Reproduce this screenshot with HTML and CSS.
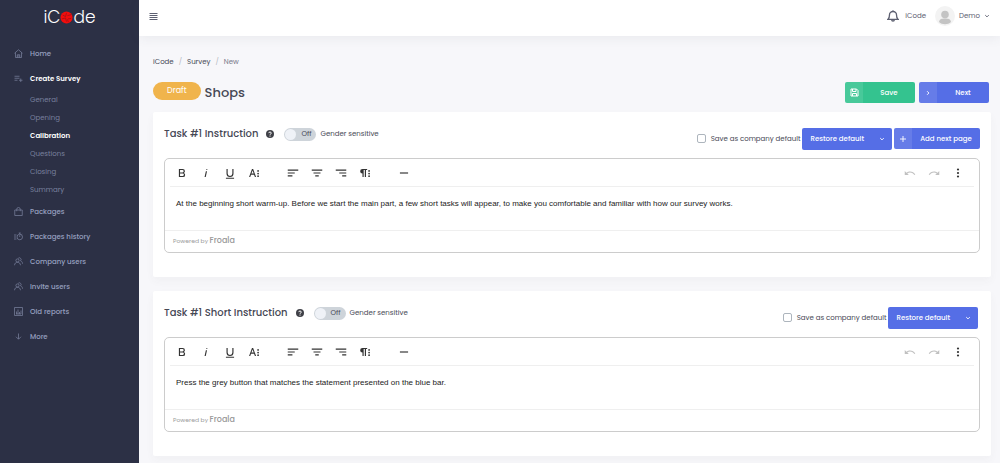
FILE: index.html
```html
<!DOCTYPE html>
<html lang="en">
<head>
<meta charset="UTF-8">
<meta name="viewport" content="width=device-width, initial-scale=1.0">
<title>iCode - Survey</title>
<link rel="stylesheet" href="styles.css">
</head>
<body>
<svg class="sprite" aria-hidden="true">
    <symbol id="i-home" viewBox="0 0 18 18"><path d="M1 8.500 9 1.500l8 7M3 7v10h12V7M6.500 17v-5.500h5V17M6.500 14h5"/></symbol>
    <symbol id="i-list" viewBox="0 0 18 18"><path d="M1 4.500h10M1 8.500h10M1 12.500h6M10 12.500h7M13.500 9v7"/></symbol>
    <symbol id="i-bag" viewBox="0 0 18 18"><path d="M1.500 6h15v11h-15zM5.500 8.500V4.500a3.500 3.500 0 0 1 7 0v4"/></symbol>
    <symbol id="i-timer" viewBox="0 0 18 18"><circle cx="11.500" cy="10" r="5.500"/><path d="M11.500 10V6.500M9.500 2h4M11.500 2v2M15.500 5l1.300-1.300M0 6h5M0 10h4M0 14h5"/></symbol>
    <symbol id="i-users" viewBox="0 0 18 18"><circle cx="7" cy="7" r="3.200"/><path d="M1 16.500c.5-4 2.500-6 6-6s5.500 2 6 6M8.500 2.500a3.200 3.200 0 1 1 4.500 5c2.500 1 3.800 3 4.200 6"/></symbol>
    <symbol id="i-chart" viewBox="0 0 18 18"><path d="M1 1h16v16H1zM5 14V9M8 14V5M11 14v-4M14 14V7M4 14h10"/></symbol>
    <symbol id="i-down" viewBox="0 0 18 18"><path d="M9 3v11M4 9.500l5 5 5-5"/></symbol>
    <symbol id="i-menu" viewBox="0 0 18 18"><path d="M1 3h16M1 7h16M1 11h16M1 15h16"/></symbol>
    <symbol id="i-bell" viewBox="0 0 18 18"><path d="M1.500 14h15c-2-1.500-2.200-3-2.200-6.500a5.300 5.300 0 0 0-10.600 0C3.700 11 3.500 12.500 1.500 14zM7 14.500a2 2 0 0 0 4 0M9 2V.5"/></symbol>
    <symbol id="i-caret" viewBox="0 0 10 10"><path d="M2 3.500l3 3 3-3"/></symbol>
    <symbol id="i-right" viewBox="0 0 10 10"><path d="M3.500 2l3 3-3 3"/></symbol>
    <symbol id="i-plus" viewBox="0 0 10 10"><path d="M5 0v10M0 5h10"/></symbol>
    <symbol id="i-save" viewBox="0 0 18 18"><path d="M2 2h11l3 3v11H2zM5 2v5h7V2M5 16v-5h8v5"/></symbol>
    <symbol id="i-help" viewBox="0 0 16 16"><circle cx="8" cy="8" r="8" fill="#3f4047"/><path d="M5.400 6.200C5.500 3.300 10.600 3.300 10.600 6.200 10.600 8 8 8 8 9.600M8 11.200v2" fill="none" stroke="#fff" stroke-width="2"/></symbol>
    <symbol id="i-bold" viewBox="0 0 24 24"><path d="M15.250 11.800A3.680 3.680 0 0 0 17 9a3.930 3.930 0 0 0-3.860-4H6.650v14h7a3.740 3.740 0 0 0 3.700-3.780V15.100a3.640 3.640 0 0 0-2.100-3.300zM8.650 7h4.200a2 2 0 0 1 0 4h-4.200zm4.600 10h-4.600v-4h4.600a2 2 0 0 1 0 4z"/></symbol>
    <symbol id="i-italic" viewBox="0 0 24 24"><path d="M11.760 9h2l-2.200 10h-2zm1.680-4a1 1 0 1 0 1 1 1 1 0 0 0-1-1z"/></symbol>
    <symbol id="i-underline" viewBox="0 0 24 24"><path d="M19 20v2H5v-2zM16 5v8a4 4 0 0 1-8 0V5H6v8a6 6 0 0 0 12 0V5z"/></symbol>
    <symbol id="i-text" viewBox="0 0 24 24"><path d="M13.550 19h2l-5-14h-2l-5 14h2l1.400-4h5.100zm-5.900-6 1.900-5.200 1.900 5.200z"/><circle cx="19" cy="17.500" r="1.500"/><circle cx="19" cy="13" r="1.500"/><circle cx="19" cy="8.500" r="1.500"/></symbol>
    <symbol id="i-left" viewBox="0 0 24 24"><path d="M3 18h8v-2H3zM3 6v2h18V6zm0 7h12v-2H3z"/></symbol>
    <symbol id="i-center" viewBox="0 0 24 24"><path d="M9 18h6v-2H9zm-3-7v2h12v-2zM3 6v2h18V6z"/></symbol>
    <symbol id="i-alignright" viewBox="0 0 24 24"><path d="M14 18h7v-2h-7zm-5-5h12v-2H9zM3 6v2h18V6z"/></symbol>
    <symbol id="i-para" viewBox="0 0 24 24"><path d="M7.700 5a4 4 0 0 0 0 8v6h2V7h2v12h2V7h2V5z"/><circle cx="19" cy="17.500" r="1.500"/><circle cx="19" cy="13" r="1.500"/><circle cx="19" cy="8.500" r="1.500"/></symbol>
    <symbol id="i-line" viewBox="0 0 24 24"><path d="M5 11h14v2H5z"/></symbol>
    <symbol id="i-undo" viewBox="0 0 24 24"><path d="M10.400 9.400c-1.700.3-3.200.9-4.600 2L3 8.500v7h7l-2.700-2.700c3.700-2.600 8.800-1.800 11.500 1.900.2.300.4.500.5.800l1.800-.9c-2.200-3.800-6.400-5.900-10.700-5.200z"/></symbol>
    <symbol id="i-redo" viewBox="0 0 24 24"><path d="M13.600 9.400c1.700.3 3.200.9 4.600 2L21 8.500v7h-7l2.700-2.700c-3.700-2.600-8.800-1.800-11.500 1.900-.2.300-.4.500-.5.800l-1.800-.9c2.200-3.800 6.400-5.900 10.700-5.200z"/></symbol>
    <symbol id="i-dots" viewBox="0 0 24 24"><circle cx="12" cy="6" r="1.900"/><circle cx="12" cy="12" r="1.900"/><circle cx="12" cy="18" r="1.900"/></symbol>
</svg>

<div class="app">
    <aside class="sidebar">
        <a class="logo" href="#">iC<svg class="brain" viewBox="0 0 14 14"><circle cx="7" cy="7" r="6.500" fill="#f20d0d"/><path d="M3 4.500 6 6l1-4M2 8.500l4-1 1 4M8 5l4-1M8.500 8.500 12 8M9 12l-1-3" fill="none" stroke="#8c1118" stroke-width=".7"/></svg>de</a>
        <nav class="menu">
            <a class="item" href="#"><svg class="icon"><use href="#i-home"/></svg>Home</a>
            <a class="item active" href="#"><svg class="icon"><use href="#i-list"/></svg>Create Survey</a>
            <div class="submenu">
                <a href="#">General</a>
                <a href="#">Opening</a>
                <a class="active" href="#">Calibration</a>
                <a href="#">Questions</a>
                <a href="#">Closing</a>
                <a href="#">Summary</a>
            </div>
            <a class="item" href="#"><svg class="icon"><use href="#i-bag"/></svg>Packages</a>
            <a class="item" href="#"><svg class="icon"><use href="#i-timer"/></svg>Packages history</a>
            <a class="item" href="#"><svg class="icon"><use href="#i-users"/></svg>Company users</a>
            <a class="item" href="#"><svg class="icon"><use href="#i-users"/></svg>Invite users</a>
            <a class="item" href="#"><svg class="icon"><use href="#i-chart"/></svg>Old reports</a>
            <a class="item" href="#"><svg class="icon"><use href="#i-down"/></svg>More</a>
        </nav>
    </aside>

    <div class="main">
        <header class="topbar">
            <button class="plain" aria-label="Menu"><svg class="icon"><use href="#i-menu"/></svg></button>
            <div class="account">
                <button class="plain" aria-label="Notifications"><svg class="icon bell"><use href="#i-bell"/></svg></button>
                <span class="company">iCode</span>
                <button class="plain user">
                    <svg class="avatar" viewBox="0 0 20 20"><circle cx="10" cy="10" r="10" fill="#f3f3f3"/><circle cx="10" cy="8.500" r="3.800" fill="#c4c4c4"/><path d="M4 16c.5-3 2.500-3.500 6-3.500s5.500.5 6 3.500c-3 3-9 3-12 0z" fill="#c4c4c4"/></svg>
                    Demo
                    <svg class="icon caret"><use href="#i-caret"/></svg>
                </button>
            </div>
        </header>

        <main class="content">
            <nav class="breadcrumb">
                <a href="#">iCode</a><i>/</i><a href="#">Survey</a><i>/</i><span>New</span>
            </nav>

            <div class="page-head">
                <span class="badge">Draft</span>
                <h1>Shops</h1>
                <div class="actions">
                    <button class="btn green"><span class="btn-icon"><svg class="icon"><use href="#i-save"/></svg></span><span class="btn-text">Save</span></button>
                    <button class="btn"><span class="btn-icon"><svg class="icon caret"><use href="#i-right"/></svg></span><span class="btn-text">Next</span></button>
                </div>
            </div>

            <section class="card">
                <div class="card-head">
                    <div class="card-title">
                        <h2>Task #1 Instruction</h2>
                        <svg class="help"><use href="#i-help"/></svg>
                        <label class="switch"><input type="checkbox"><span class="track">Off</span>Gender sensitive</label>
                    </div>
                    <div class="card-tools">
                        <label class="check"><input type="checkbox">Save as company default</label>
                        <div class="split">
                            <button class="btn">Restore default</button>
                            <button class="btn toggle" aria-label="More options"><svg class="icon caret"><use href="#i-caret"/></svg></button>
                        </div>
                        <button class="btn add"><span class="btn-icon"><svg class="icon caret"><use href="#i-plus"/></svg></span><span class="btn-text">Add next page</span></button>
                    </div>
                </div>
                <div class="editor">
                    <div class="toolbar">
                        <div class="group">
                            <button aria-label="Bold"><svg><use href="#i-bold"/></svg></button>
                            <button aria-label="Italic"><svg><use href="#i-italic"/></svg></button>
                            <button aria-label="Underline"><svg><use href="#i-underline"/></svg></button>
                            <button aria-label="More text"><svg><use href="#i-text"/></svg></button>
                        </div>
                        <div class="group">
                            <button aria-label="Align left"><svg><use href="#i-left"/></svg></button>
                            <button aria-label="Align center"><svg><use href="#i-center"/></svg></button>
                            <button aria-label="Align right"><svg><use href="#i-alignright"/></svg></button>
                            <button aria-label="More paragraph"><svg><use href="#i-para"/></svg></button>
                        </div>
                        <div class="group">
                            <button aria-label="Insert line"><svg><use href="#i-line"/></svg></button>
                        </div>
                        <div class="group end">
                            <button aria-label="Undo" disabled><svg><use href="#i-undo"/></svg></button>
                            <button aria-label="Redo" disabled><svg><use href="#i-redo"/></svg></button>
                            <button aria-label="More"><svg><use href="#i-dots"/></svg></button>
                        </div>
                    </div>
                    <div class="text" contenteditable="true">At the beginning short warm-up. Before we start the main part, a few short tasks will appear, to make you comfortable and familiar with how our survey works.</div>
                    <div class="powered">Powered by <a href="#">Froala</a></div>
                </div>
            </section>

            <section class="card">
                <div class="card-head">
                    <div class="card-title">
                        <h2>Task #1 Short Instruction</h2>
                        <svg class="help"><use href="#i-help"/></svg>
                        <label class="switch"><input type="checkbox"><span class="track">Off</span>Gender sensitive</label>
                    </div>
                    <div class="card-tools">
                        <label class="check"><input type="checkbox">Save as company default</label>
                        <div class="split last">
                            <button class="btn">Restore default</button>
                            <button class="btn toggle" aria-label="More options"><svg class="icon caret"><use href="#i-caret"/></svg></button>
                        </div>
                    </div>
                </div>
                <div class="editor">
                    <div class="toolbar">
                        <div class="group">
                            <button aria-label="Bold"><svg><use href="#i-bold"/></svg></button>
                            <button aria-label="Italic"><svg><use href="#i-italic"/></svg></button>
                            <button aria-label="Underline"><svg><use href="#i-underline"/></svg></button>
                            <button aria-label="More text"><svg><use href="#i-text"/></svg></button>
                        </div>
                        <div class="group">
                            <button aria-label="Align left"><svg><use href="#i-left"/></svg></button>
                            <button aria-label="Align center"><svg><use href="#i-center"/></svg></button>
                            <button aria-label="Align right"><svg><use href="#i-alignright"/></svg></button>
                            <button aria-label="More paragraph"><svg><use href="#i-para"/></svg></button>
                        </div>
                        <div class="group">
                            <button aria-label="Insert line"><svg><use href="#i-line"/></svg></button>
                        </div>
                        <div class="group end">
                            <button aria-label="Undo" disabled><svg><use href="#i-undo"/></svg></button>
                            <button aria-label="Redo" disabled><svg><use href="#i-redo"/></svg></button>
                            <button aria-label="More"><svg><use href="#i-dots"/></svg></button>
                        </div>
                    </div>
                    <div class="text" contenteditable="true">Press the grey button that matches the statement presented on the blue bar.</div>
                    <div class="powered">Powered by <a href="#">Froala</a></div>
                </div>
            </section>
        </main>
    </div>
</div>
</body>
</html>
```

FILE: styles.css
```css
* {
    box-sizing: border-box;
}
body {
    margin: 0;
    background: #f7f7fa;
    color: #464855;
    font-family: Poppins, Inter, sans-serif;
    font-size: 7px;
    line-height: 12px;
}
a {
    color: inherit;
    text-decoration: none;
}
button {
    border: none;
    padding: 0;
    background: none;
    color: inherit;
    font: inherit;
    cursor: pointer;
}
.sprite {
    display: none;
}
.icon {
    width: 9px;
    height: 9px;
    flex: none;
    fill: none;
    stroke: currentColor;
    stroke-width: 2;
}
.caret {
    width: 6px;
    height: 6px;
    stroke-width: 1.5;
}
.app {
    display: flex;
    min-height: 100vh;
}

/* sidebar */
.sidebar {
    width: 139px;
    flex: none;
    background: #2c3045;
    color: #98a0c0;
}
.logo {
    display: flex;
    justify-content: center;
    align-items: center;
    height: 34px;
    margin-bottom: 7px;
    color: #fff;
    font-size: 17px;
    font-weight: 300;
}
.brain {
    width: 13px;
    height: 13px;
}
.item {
    display: flex;
    align-items: center;
    gap: 7px;
    height: 25px;
    padding-left: 14px;
    font-weight: 500;
}
.item .icon {
    color: #98a0c0;
    opacity: 0.7;
    stroke-width: 1.5;
}
.submenu {
    padding-left: 30px;
    color: #79809e;
}
.submenu a {
    display: block;
    line-height: 18px;
}
.menu .active {
    color: #fff;
    font-weight: 600;
}

/* top bar */
.main {
    flex: 1;
    min-width: 0;
}
.topbar {
    display: flex;
    justify-content: space-between;
    align-items: center;
    height: 36px;
    padding: 0 10px 4px;
    background: #fff;
    box-shadow: 0 2px 12px rgba(70, 72, 85, 0.08);
    color: #5d6071;
}
.plain {
    display: flex;
    align-items: center;
}
.account {
    display: flex;
    align-items: center;
}
.bell {
    width: 12px;
    height: 12px;
}
.company {
    margin: 0 9px 0 6px;
}
.user {
    gap: 4px;
}
.avatar {
    width: 20px;
    height: 20px;
}

/* content */
.content {
    padding: 20px 9px 7px 14px;
}
.breadcrumb {
    display: flex;
    gap: 5px;
}
.breadcrumb i {
    color: #b5b7c2;
    font-style: normal;
}
.breadcrumb span {
    color: #777a8a;
}
.page-head {
    display: flex;
    align-items: center;
    gap: 4px;
    height: 21px;
    margin: 14px 2px 9px 0;
}
.badge {
    align-self: flex-start;
    padding: 3px 14px;
    border-radius: 9px;
    background: #f0b44c;
    color: #fff;
    font-size: 8px;
}
h1 {
    margin: 0;
    font-size: 13px;
    font-weight: 500;
}
.actions {
    display: flex;
    gap: 4px;
    margin-left: auto;
}
.btn {
    display: flex;
    align-items: center;
    height: 21px;
    border-radius: 2px;
    background: #556ee6;
    color: #fff;
    font-weight: 500;
    white-space: nowrap;
}
.btn-icon {
    display: flex;
    align-items: center;
    justify-content: center;
    align-self: stretch;
    width: 18px;
    border-radius: 2px 0 0 2px;
    background: rgba(255, 255, 255, 0.1);
}
.btn-text {
    width: 52px;
    text-align: center;
}
.green {
    background: #34c38f;
}

.card {
    padding: 0 11px 24px;
    border-radius: 2px;
    background: #fff;
    box-shadow: 0 4px 8px rgba(70, 72, 85, 0.04);
}
.card + .card {
    margin-top: 14px;
}
.card-head {
    display: flex;
    justify-content: space-between;
    height: 46px;
}
.card-title {
    display: flex;
    align-items: center;
    height: 44px;
}
h2 {
    margin: 0;
    font-size: 10px;
    font-weight: 500;
}
.help {
    width: 8px;
    height: 8px;
    margin: 0 10px 0 8px;
}
.switch {
    display: flex;
    align-items: center;
    gap: 4px;
}
.switch input {
    position: absolute;
    opacity: 0;
}
.track {
    display: flex;
    align-items: center;
    justify-content: space-between;
    width: 32px;
    height: 13px;
    padding: 0 5px 0 1px;
    border-radius: 7px;
    background: #ced4da;
}
.track::before {
    content: "";
    width: 11px;
    height: 11px;
    border-radius: 50%;
    background: #eff2f7;
}
.card-tools {
    display: flex;
    align-items: center;
    height: 53px;
    gap: 2px;
}
.check {
    display: flex;
    align-items: center;
    gap: 5px;
}
.check input {
    appearance: none;
    width: 9px;
    height: 9px;
    margin: 0;
    border: 1px solid #adb5bd;
    border-radius: 2px;
}
.split {
    display: flex;
}
.split .btn {
    height: 22px;
    padding: 0 8px;
    border-radius: 2px 0 0 2px;
}
.split .toggle {
    padding: 0 7px;
    border-radius: 0 2px 2px 0;
}
.last {
    margin-right: 2px;
}
.add .btn-text {
    width: 68px;
}

/* editor */
.editor {
    border: 1px solid #ccc;
    border-radius: 5px;
}
.toolbar {
    display: flex;
    gap: 15px;
    height: 28px;
    margin: 0 5px;
    border-bottom: 1px solid #efefef;
}
.group {
    display: flex;
}
.group button {
    display: flex;
    align-items: center;
    justify-content: center;
    width: 24px;
}
.group svg {
    width: 14px;
    height: 14px;
    fill: #333;
}
.group button:disabled {
    opacity: 0.3;
}
.end {
    margin-left: auto;
    margin-right: 4px;
}
.text {
    min-height: 43px;
    padding: 11px;
    color: #222;
    font-family: Arial, "Liberation Sans", sans-serif;
    font-size: 8px;
}
.powered {
    height: 22px;
    padding: 4px 8px;
    border-top: 1px solid #efefef;
    color: #999;
    font-size: 6px;
}
.powered a {
    font-size: 8px;
    font-weight: 500;
}
```
